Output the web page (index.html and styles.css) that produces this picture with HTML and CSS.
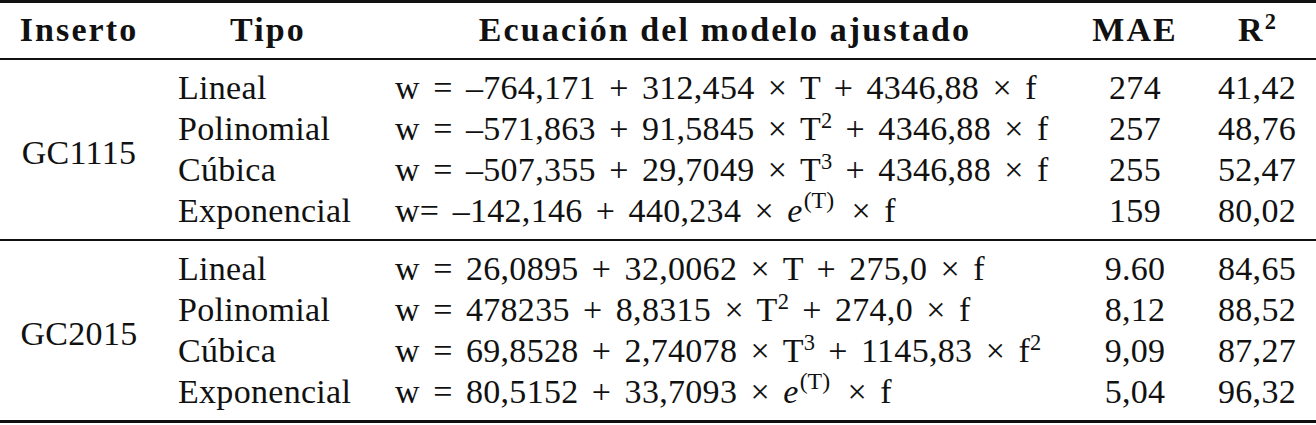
FILE: index.html
```html
<!DOCTYPE html>
<html lang="es">
<head>
    <meta charset="UTF-8">
    <meta name="viewport" content="width=device-width, initial-scale=1.0">
    <title>Modelos ajustados por inserto</title>
    <link rel="stylesheet" href="styles.css">
</head>
<body>
    <table class="results">
        <colgroup>
            <col class="c-insert">
            <col class="c-type">
            <col class="c-eq">
            <col class="c-mae">
            <col class="c-r2">
        </colgroup>
        <thead>
            <tr>
                <th>Inserto</th>
                <th>Tipo</th>
                <th>Ecuación del modelo ajustado</th>
                <th>MAE</th>
                <th>R<sup>2</sup></th>
            </tr>
        </thead>
        <tbody class="group">
            <tr>
                <td class="insert" rowspan="4">GC1115</td>
                <td class="type">Lineal</td>
                <td class="eq">w = –764,171 + 312,454 × T + 4346,88 × f</td>
                <td class="num">274</td>
                <td class="num">41,42</td>
            </tr>
            <tr>
                <td class="type">Polinomial</td>
                <td class="eq">w = –571,863 + 91,5845 × T<sup>2</sup> + 4346,88 × f</td>
                <td class="num">257</td>
                <td class="num">48,76</td>
            </tr>
            <tr>
                <td class="type">Cúbica</td>
                <td class="eq">w = –507,355 + 29,7049 × T<sup>3</sup> + 4346,88 × f</td>
                <td class="num">255</td>
                <td class="num">52,47</td>
            </tr>
            <tr>
                <td class="type">Exponencial</td>
                <td class="eq">w= –142,146 + 440,234 × <i>e</i><sup class="exp">(T)</sup> × f</td>
                <td class="num">159</td>
                <td class="num">80,02</td>
            </tr>
        </tbody>
        <tbody class="group">
            <tr>
                <td class="insert" rowspan="4">GC2015</td>
                <td class="type">Lineal</td>
                <td class="eq">w = 26,0895 + 32,0062 × T + 275,0 × f</td>
                <td class="num">9.60</td>
                <td class="num">84,65</td>
            </tr>
            <tr>
                <td class="type">Polinomial</td>
                <td class="eq">w = 478235 + 8,8315 × T<sup>2</sup> + 274,0 × f</td>
                <td class="num">8,12</td>
                <td class="num">88,52</td>
            </tr>
            <tr>
                <td class="type">Cúbica</td>
                <td class="eq">w = 69,8528 + 2,74078 × T<sup>3</sup> + 1145,83 × f<sup>2</sup></td>
                <td class="num">9,09</td>
                <td class="num">87,27</td>
            </tr>
            <tr>
                <td class="type">Exponencial</td>
                <td class="eq">w = 80,5152 + 33,7093 × <i>e</i><sup class="exp">(T)</sup> × f</td>
                <td class="num">5,04</td>
                <td class="num">96,32</td>
            </tr>
        </tbody>
    </table>
</body>
</html>
```

FILE: styles.css
```css
* {
    margin: 0;
    padding: 0;
    box-sizing: border-box;
}

body {
    font-family: "Liberation Serif", "Times New Roman", serif;
    font-size: 34px;
    color: #111;
    background: white;
}

.results {
    width: 1316px;
    border-collapse: collapse;
    table-layout: fixed;
}

.c-insert { width: 158px; }
.c-type { width: 220px; }
.c-eq { width: 694px; }
.c-mae { width: 126px; }
.c-r2 { width: 118px; }

thead tr {
    border-top: 3px solid #111;
    border-bottom: 2px solid #111;
}

th {
    height: 57px;
    font-weight: bold;
    letter-spacing: 2.1px;
    text-align: center;
    vertical-align: middle;
    white-space: nowrap;
}

.group {
    border-bottom: 2px solid #111;
}

.group:last-child {
    border-bottom: 3px solid #111;
}

td {
    height: 41px;
    line-height: 41px;
    white-space: nowrap;
    vertical-align: middle;
    letter-spacing: 0.3px;
}

.group tr:first-child td {
    height: 48px;
    padding-top: 7px;
}

.group tr:last-child td {
    height: 49px;
    padding-bottom: 8px;
}

.group td.insert {
    padding: 0;
    text-align: center;
}

.type {
    padding-left: 20px;
}

.eq {
    padding-left: 17px;
    word-spacing: 4.5px;
}

.num {
    text-align: center;
}

sup {
    font-size: 0.66em;
    line-height: 0;
    vertical-align: 0.55em;
    letter-spacing: 0;
}

sup.exp {
    font-size: 0.7em;
    margin-left: 1px;
    margin-right: 4px;
}

i {
    font-style: italic;
}
```
